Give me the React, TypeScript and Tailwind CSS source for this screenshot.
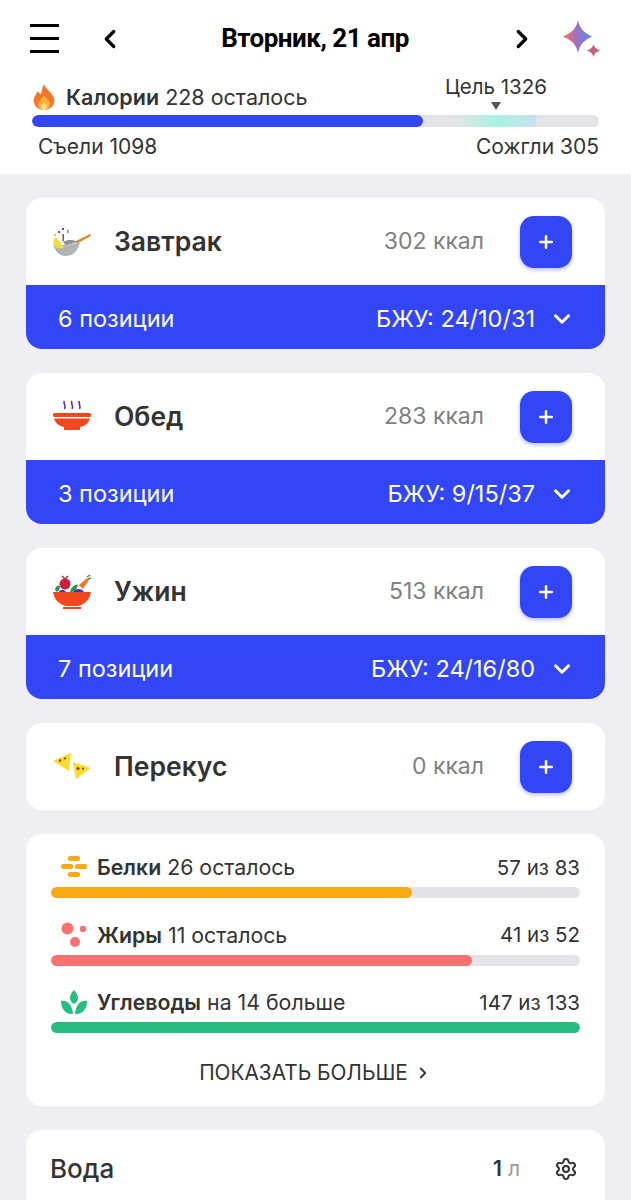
import { Settings, ChevronDown, ChevronLeft, ChevronRight, Plus } from "lucide-react";

const WokIcon = () => (
  <svg width="38" height="30" viewBox="0 0 38 30">
    <rect x="9" y="1" width="2" height="2" fill="#8a4b2a" />
    <rect x="14" y="3" width="1.5" height="3" fill="#4caf50" />
    <rect x="5" y="4" width="2" height="2" fill="#a3402c" />
    <rect x="9.5" y="7" width="1.5" height="7" fill="#b5442e" />
    <circle cx="2" cy="8" r="1" fill="#c9b458" />
    <path d="M22 14.5 L37 7 L38 9 L24 16.5 Z" fill="#d98a2b" />
    <path d="M0.5 17 C6 19 20 19 27 14 C26 23 20 29 13 29 C6 29 1.5 24 0.5 17 Z" fill="#b1b4b4" />
    <path d="M10 15 C15 12 21 13 24 14.5 C20 17 15 18 12 18 Z" fill="#8f9494" />
    <path d="M1.5 11 C3 9 4 12 6 14 C8 16 9 19 11 21 C7 22 3 21 1 18 C0 15 0.5 13 1.5 11 Z" fill="#f3dc3a" />
  </svg>
);

const SoupIcon = () => (
  <svg width="40" height="34" viewBox="0 0 40 34">
    <g fill="none" stroke="#5b2d9e" strokeWidth="1.6">
      <path d="M12.5 1 C10.5 3.5 14.5 5 12.5 9" />
      <path d="M20 1 C18 3.5 22 5 20 9" />
      <path d="M27.5 1 C25.5 3.5 29.5 5 27.5 9" />
    </g>
    <rect x="1" y="13" width="38" height="4" rx="1.5" fill="#f2471c" />
    <path d="M2 18.5 H38 C37 23 33 26 28 27 V30 H12 V27 C7 26 3 23 2 18.5 Z" fill="#f2471c" />
  </svg>
);

const SaladIcon = () => (
  <svg width="40" height="36" viewBox="0 0 40 36">
    <path d="M27 11 L35 4 L37 6 L31 15 Z" fill="#e8792e" />
    <path d="M35 3 L38 1 M36 5 L39 4" stroke="#3e9b3e" strokeWidth="1.5" />
    <path d="M10 2 L13 5 L16 2" fill="none" stroke="#c8213d" strokeWidth="1.5" />
    <circle cx="13" cy="10" r="5.5" fill="#c8213d" />
    <path d="M3 16 C3 12 6 11 8 12 C8 15 7 17 5 18 Z" fill="#2c9a45" />
    <path d="M18 18 C19 13 23 10 26 11 C25 15 23 17 20 18 Z" fill="#2c9a45" />
    <path d="M7 18 C8 15 12 15 14 18 Z" fill="#5b2d9e" />
    <path d="M21 18 C23 14 30 14 32 18 Z" fill="#5b2d9e" />
    <path d="M1 18 H39 L38.5 20 C37 27 31 31 26 32 H14 C9 31 3 27 1.5 20 Z" fill="#f2471c" />
    <rect x="11" y="33" width="18" height="2" fill="#f2471c" />
  </svg>
);

const NachosIcon = () => (
  <svg width="40" height="30" viewBox="0 0 40 30">
    <path d="M1 9 L19 1 L17 19 Z" fill="#f7dd2a" />
    <path d="M21 10 L39 16 L24 27 Z" fill="#f7dd2a" />
    <circle cx="8" cy="8.5" r="1.2" fill="#a3262a" />
    <circle cx="13" cy="6.5" r="1" fill="#5c3a1e" />
    <circle cx="26" cy="16.5" r="1.5" fill="#a3262a" />
    <circle cx="31" cy="16.5" r="1" fill="#5c3a1e" />
  </svg>
);

const Sparkle = () => (
  <svg width="38" height="38" viewBox="0 0 38 38">
    <defs>
      <linearGradient id="sp" x1="0" y1="0.5" x2="1" y2="0.5">
        <stop offset="0" stopColor="#f0794a" />
        <stop offset="0.45" stopColor="#a56ec0" />
        <stop offset="1" stopColor="#4f8df0" />
      </linearGradient>
    </defs>
    <path d="M15 0 C16.5 8 21 13 29 16.5 C21 20 16.5 25 15 33 C13.5 25 9 20 0 16.5 C9 13 13.5 8 15 0 Z" fill="url(#sp)" />
    <path d="M30.5 24 C31 27 33 29 37 30.5 C33 32 31 34 30.5 37 C30 34 28 32 24 30.5 C28 29 30 27 30.5 24 Z" fill="#c8627e" />
  </svg>
);

const Flame = () => (
  <svg width="24" height="26" viewBox="0 0 24 26">
    <path d="M12 0 C13 5 20 8 22 14 C24 21 18 26 12 26 C6 26 0 21 2 14 C3 11 5 9 6 7 C7 9 8 10 9 10 C10 7 10 3 12 0 Z" fill="#f4762a" />
    <path d="M12 11 C13 14 18 16 18 20 C18 24 15 26 12 26 C9 26 6 24 6 20 C6 17 10 15 12 11 Z" fill="#fbb03b" />
    <path d="M12 18 C13 20 15 21 15 23 C15 25 13.5 26 12 26 C10.5 26 9 25 9 23 C9 21 11 20 12 18 Z" fill="#fde07a" />
  </svg>
);

const ProteinIcon = () => (
  <svg width="26" height="22" viewBox="0 0 26 22">
    <g fill="#fbaa14">
      <rect x="7" y="0" width="12" height="5" rx="2" />
      <rect x="0" y="8" width="12" height="5" rx="2" />
      <rect x="14" y="8" width="12" height="5" rx="2" />
      <rect x="7" y="16" width="12" height="5" rx="2" />
    </g>
  </svg>
);

const FatIcon = () => (
  <svg width="26" height="26" viewBox="0 0 26 26">
    <g fill="#f87171">
      <circle cx="6.5" cy="6.5" r="6" />
      <circle cx="22" cy="7" r="3.2" />
      <circle cx="14" cy="20" r="5" />
    </g>
  </svg>
);

const CarbIcon = () => (
  <svg width="26" height="25" viewBox="0 0 26 25">
    <g fill="#26bd7e">
      <path d="M13 0 C16 3 17 6 17 8 C17 11 15 13 13 14 C11 13 9 11 9 8 C9 6 10 3 13 0 Z" />
      <path d="M0 11 C6 10 11 14 12 24 C5 25 0 19 0 11 Z" />
      <path d="M26 11 C20 10 15 14 14 24 C21 25 26 19 26 11 Z" />
    </g>
  </svg>
);

const meals = [
  { name: "Завтрак", kcal: "302 ккал", items: "6 позиции", macros: "БЖУ: 24/10/31", icon: <WokIcon /> },
  { name: "Обед", kcal: "283 ккал", items: "3 позиции", macros: "БЖУ: 9/15/37", icon: <SoupIcon /> },
  { name: "Ужин", kcal: "513 ккал", items: "7 позиции", macros: "БЖУ: 24/16/80", icon: <SaladIcon /> },
  { name: "Перекус", kcal: "0 ккал", icon: <NachosIcon /> },
];

const macros = [
  { label: "Белки", note: "26 осталось", value: "57 из 83", width: "w-[68.3%]", color: "bg-[#fbaa14]", icon: <ProteinIcon /> },
  { label: "Жиры", note: "11 осталось", value: "41 из 52", width: "w-[79.5%]", color: "bg-[#f87171]", icon: <FatIcon /> },
  { label: "Углеводы", note: "на 14 больше", value: "147 из 133", width: "w-full", color: "bg-[#26bd7e]", icon: <CarbIcon /> },
];

export default function App() {
  return (
    <div className="h-[1200px] overflow-hidden bg-[#eeeef3] font-['Inter','Noto_Sans',sans-serif] text-[#333333]">
      {/* Header */}
      <header className="h-[174px] bg-white px-[30px]">
        <div className="flex h-[76px] items-center pt-[1px]">
          <div className="flex w-[29px] flex-col gap-[10px]">
            <div className="h-[3px] bg-black" />
            <div className="h-[3px] bg-black" />
            <div className="h-[3px] bg-black" />
          </div>
          <ChevronLeft className="ml-[36px] h-[30px] w-[30px] text-black" strokeWidth={2.6} />
          <div className="flex-1 pr-[2px] text-center font-['Roboto',sans-serif] text-[26px] font-bold tracking-[-0.5px] text-black">
            Вторник, 21 апр
          </div>
          <ChevronRight className="mr-[26px] h-[30px] w-[30px] text-black" strokeWidth={2.6} />
          <Sparkle />
        </div>
        <div className="mr-[2px] ml-[2px] flex items-end justify-between">
          <div className="flex items-center gap-[10px] pb-[5px]">
            <Flame />
            <div className="text-[21.5px] leading-[26px]">
              <span className="font-semibold">Калории</span> 228 осталось
            </div>
          </div>
          <div className="mr-[52px] flex flex-col items-center">
            <div className="text-[20.5px] leading-[22px]">Цель 1326</div>
            <div className="mt-[4px] mb-[5px] h-0 w-0 border-x-[5px] border-t-[8px] border-x-transparent border-t-[#555555]" />
          </div>
        </div>
        <div className="mr-[2px] ml-[2px] flex h-[12px] overflow-hidden rounded-full bg-[#e3e3e8]">
          <div className="h-full w-[391px] rounded-full bg-[#3346f5]" />
          <div className="ml-[32px] h-full w-[81px] bg-gradient-to-r from-[#e3e3e8] via-[#a8f2e0] to-[#c5e2f0]" />
        </div>
        <div className="mt-[7px] mr-[2px] ml-[2px] flex justify-between pl-[6px] text-[21px] leading-[26px]">
          <span>Съели 1098</span>
          <span>Сожгли 305</span>
        </div>
      </header>

      {/* Meals */}
      <main className="flex flex-col gap-[24px] px-[26px] pt-[24px]">
        {meals.map((meal) => (
          <section key={meal.name} className="overflow-hidden rounded-[16px] bg-white">
            <div className="flex h-[87px] items-center pl-[26px] pr-[33px]">
              <div className="flex w-[40px] justify-center">{meal.icon}</div>
              <div className="ml-[22px] flex-1 text-[26.5px] font-semibold">{meal.name}</div>
              <div className="mr-[36px] text-[23px] text-[#808080]">{meal.kcal}</div>
              <button className="flex h-[52px] w-[52px] items-center justify-center rounded-[14px] bg-[#3346f5] text-white shadow-[0_2px_4px_rgba(51,70,245,0.35)]">
                <Plus className="h-[20px] w-[20px]" strokeWidth={3} />
              </button>
            </div>
            {meal.items && (
              <div className="flex h-[64px] items-center justify-between bg-[#3346f5] pt-[3px] pl-[32px] pr-[30px] text-[23.5px] text-white">
                <span>{meal.items}</span>
                <div className="flex items-center gap-[14px]">
                  <span>{meal.macros}</span>
                  <ChevronDown className="h-[26px] w-[26px]" strokeWidth={2.8} />
                </div>
              </div>
            )}
          </section>
        ))}

        {/* Macros */}
        <section className="flex h-[272px] flex-col rounded-[16px] bg-white px-[25px] pt-[20px]">
          <div className="flex flex-col gap-[23.5px]">
            {macros.map((m) => (
              <div key={m.label}>
                <div className="flex h-[28px] items-center">
                  <div className="flex w-[46px] justify-center pb-[2px]">{m.icon}</div>
                  <div className="flex-1 text-[21.3px]">
                    <span className="font-semibold">{m.label}</span> {m.note}
                  </div>
                  <div className="text-[20.5px]">{m.value}</div>
                </div>
                <div className="mt-[5px] h-[11px] overflow-hidden rounded-full bg-[#e3e3e8]">
                  <div className={`h-full rounded-full ${m.width} ${m.color}`} />
                </div>
              </div>
            ))}
          </div>
          <div className="mt-[24px] flex items-center justify-center gap-[6px] text-[20.8px]">
            ПОКАЗАТЬ БОЛЬШЕ
            <ChevronRight className="h-[18px] w-[18px]" strokeWidth={2.4} />
          </div>
        </section>

        {/* Water */}
        <section className="flex h-[120px] items-start rounded-[16px] bg-white px-[24px] pt-[22px]">
          <div className="flex-1 text-[26px] font-medium leading-[34px]">Вода</div>
          <div className="mr-[34px] text-[21px] leading-[34px]">
            <span className="font-semibold">1</span> <span className="text-[#9a9a9a]">л</span>
          </div>
          <Settings className="mt-[5px] mr-[3px] h-[24px] w-[24px]" strokeWidth={2} />
        </section>
      </main>
    </div>
  );
}
